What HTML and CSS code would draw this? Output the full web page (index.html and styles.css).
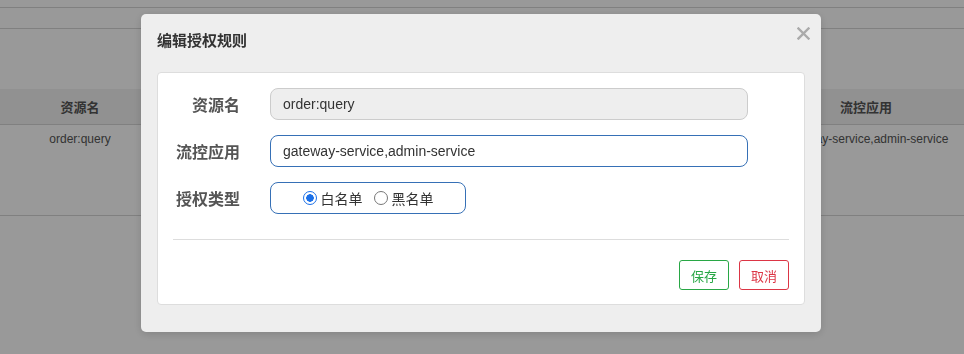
FILE: index.html
```html
<!DOCTYPE html>
<html lang="zh">
<head>
<meta charset="UTF-8">
<meta name="viewport" content="width=device-width, initial-scale=1.0">
<title>授权规则</title>
<link rel="stylesheet" href="styles.css">
</head>
<body>
<div class="page">
    <div class="toolbar"></div>
    <div class="rule-table">
        <div class="table-head">
            <div class="col-resource">资源名</div>
            <div class="col-mid"></div>
            <div class="col-app">流控应用</div>
        </div>
        <div class="table-row">
            <div class="col-resource">order:query</div>
            <div class="col-mid"></div>
            <div class="col-app">gateway-service,admin-service</div>
        </div>
    </div>
</div>

<!-- Modal -->
<div class="modal">
    <div class="modal-content">
        <div class="modal-header">
            <h3>编辑授权规则</h3>
            <span class="close-btn">
                <svg width="13" height="13" viewBox="0 0 13 13"><path d="M1.5 1.5 L11.5 11.5 M11.5 1.5 L1.5 11.5" stroke="#aaa" stroke-width="2.4" stroke-linecap="square"/></svg>
            </span>
        </div>
        <div class="panel">
            <div class="form-grid">
                <label>资源名</label>
                <input type="text" class="field" value="order:query" disabled>
                <label>流控应用</label>
                <input type="text" class="field field-active" value="gateway-service,admin-service">
                <label>授权类型</label>
                <div class="radio-box">
                    <label class="radio"><input type="radio" name="strategy" checked> 白名单</label>
                    <label class="radio"><input type="radio" name="strategy"> 黑名单</label>
                </div>
            </div>
            <div class="divider"></div>
            <div class="actions">
                <button class="btn btn-save">保存</button>
                <button class="btn btn-cancel">取消</button>
            </div>
        </div>
    </div>
</div>
</body>
</html>
```

FILE: styles.css
```css
body {
    font-family: "Liberation Sans", "Noto Sans CJK SC", sans-serif;
    margin: 0;
    background-color: #fff;
    color: #555;
}
.toolbar {
    margin-top: 7px;
    height: 20px;
    border-top: 1px solid #d6d6d6;
    border-bottom: 1px solid #d6d6d6;
}
.rule-table {
    margin-top: 60px;
}
.table-head {
    display: flex;
    align-items: center;
    height: 35px;
    background-color: #f2f2f2;
    border-bottom: 1px solid #d6d6d6;
    font-size: 13px;
    font-weight: bold;
}
.table-row {
    display: flex;
    height: 91px;
    padding-top: 7px;
    box-sizing: border-box;
    border-bottom: 1px solid #d6d6d6;
    font-size: 12px;
}
.col-resource {
    width: 160px;
    text-align: center;
}
.col-mid {
    flex: 1;
}
.col-app {
    width: 172px;
    margin-right: 12px;
    text-align: center;
    white-space: nowrap;
}
/* Modal styles */
.modal {
    position: fixed;
    z-index: 1000;
    left: 0;
    top: 0;
    width: 100%;
    height: 100%;
    background-color: rgba(0, 0, 0, 0.4);
}
.modal-content {
    width: 680px;
    height: 318px;
    box-sizing: border-box;
    margin: 14px 0 0 141px;
    padding: 0 16px;
    background-color: #eee;
    border-radius: 5px;
    box-shadow: 0 2px 8px rgba(0, 0, 0, 0.15);
}
.modal-header {
    display: flex;
    justify-content: space-between;
    align-items: flex-start;
    height: 37px;
    padding-top: 17px;
    margin-bottom: 4px;
}
.modal-header h3 {
    margin: 0;
    font-size: 15px;
    line-height: 20px;
    color: #333;
}
.close-btn {
    margin-top: -4px;
    margin-right: -5px;
    display: flex;
}
.panel {
    background-color: #fff;
    border: 1px solid #ddd;
    border-radius: 4px;
    padding: 15px 15px 14px;
}
.form-grid {
    display: grid;
    grid-template-columns: 67px 478px;
    column-gap: 30px;
    row-gap: 15px;
    align-items: center;
}
.form-grid > label {
    text-align: right;
    font-size: 16px;
    font-weight: bold;
    color: #555;
}
.field {
    height: 32px;
    box-sizing: border-box;
    padding: 0 12px;
    border: 1px solid #ccc;
    border-radius: 8px;
    font-family: "Liberation Sans", sans-serif;
    font-size: 14px;
    color: #333;
    background-color: #fff;
}
.field:disabled {
    background-color: #eee;
    color: #333;
}
.field-active {
    border-color: #3670b6;
    outline: none;
}
.radio-box {
    width: 196px;
    height: 32px;
    box-sizing: border-box;
    border: 1px solid #3670b6;
    border-radius: 8px;
    display: flex;
    align-items: center;
    justify-content: center;
    gap: 11px;
}
.radio {
    display: flex;
    align-items: center;
    gap: 4px;
    font-size: 14px;
    color: #333;
}
.radio input {
    appearance: none;
    margin: 0;
    width: 14px;
    height: 14px;
    border: 1px solid #777;
    border-radius: 50%;
    box-sizing: border-box;
}
.radio input:checked {
    border: 1.5px solid #1a6fe8;
    background: radial-gradient(circle, #1a6fe8 0 3.5px, #fff 4px);
}
.divider {
    margin-top: 25px;
    border-top: 1px solid #ddd;
}
.actions {
    display: flex;
    justify-content: flex-end;
    gap: 10px;
    margin-top: 20px;
}
.btn {
    width: 50px;
    height: 30px;
    background-color: #fff;
    border: 1px solid;
    border-radius: 3px;
    font-family: "Noto Sans CJK SC", sans-serif;
    font-size: 13px;
    cursor: pointer;
}
.btn-save {
    color: #28a745;
    border-color: #28a745;
}
.btn-cancel {
    color: #dc3545;
    border-color: #dc3545;
}
```
